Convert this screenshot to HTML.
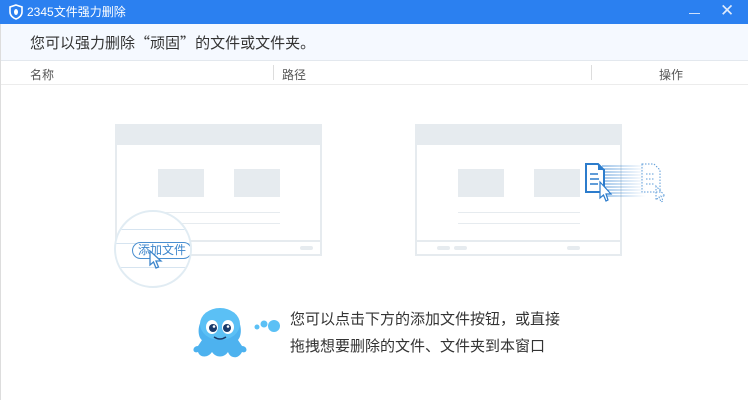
<!DOCTYPE html>
<html><head><meta charset="utf-8"><style>
*{margin:0;padding:0;box-sizing:border-box}
body{width:748px;height:400px;overflow:hidden;background:#fff;font-family:"Liberation Sans","Noto Sans CJK SC",sans-serif;position:relative}
.a{position:absolute}
.win{position:absolute;width:207px;height:132px;border:2px solid #e6ebef;background:#fff}
.win .top{position:absolute;left:0;top:0;right:0;height:19px;background:#e6ebef}
.box{position:absolute;width:46px;height:28px;background:#e6ebef}
.ln{position:absolute;height:1px;background:#e6ebef;width:122px;left:41px}
.bot{position:absolute;left:0;right:0;top:114px;height:2px;background:#e6ebef}
.pill{position:absolute;height:4px;width:13px;border-radius:2px;background:#e6ebef;top:120px}
.q{font-family:"Noto Sans CJK SC",sans-serif}
</style></head><body>
<div class="a" style="left:0;top:0;width:748px;height:24px;background:#2b80f0"></div>
<svg class="a" style="left:9px;top:4px" width="14" height="16" viewBox="0 0 14 16"><path d="M7 1 L13 3 V8 C13 11.5 10 14 7 15 C4 14 1 11.5 1 8 V3 Z" fill="none" stroke="#fff" stroke-width="1.6"/><ellipse cx="7" cy="8" rx="2" ry="3" fill="#fff"/></svg>
<div class="a" style="left:27px;top:4px;color:#fff;font-size:12px;line-height:16px">2345文件强力删除</div>
<div class="a" style="left:689px;top:13px;width:11px;height:1px;background:#cfe0fb"></div>
<div class="a" style="left:720px;top:1px;color:#dfeafc;font-size:17px;line-height:20px">✕</div>
<div class="a" style="left:0;top:24px;width:748px;height:37px;background:#f5f9ff;border-bottom:1px solid #e3e8ee"></div>
<div class="a" style="left:30px;top:33px;font-size:15px;color:#333;line-height:20px">您可以强力删除<span class="q">“</span>顽固<span class="q">”</span>的文件或文件夹。</div>
<div class="a" style="left:0;top:61px;width:748px;height:24px;border-bottom:1px solid #ececec"></div>
<div class="a" style="left:30px;top:66px;font-size:12px;color:#555">名称</div>
<div class="a" style="left:273px;top:65px;width:1px;height:15px;background:#ddd"></div>
<div class="a" style="left:282px;top:66px;font-size:12px;color:#555">路径</div>
<div class="a" style="left:591px;top:65px;width:1px;height:15px;background:#ddd"></div>
<div class="a" style="left:659px;top:66px;font-size:12px;color:#555">操作</div>
<div class="a" style="left:0;top:24px;width:1px;height:376px;background:#ddd"></div>

<div class="win" style="left:115px;top:124px"><div class="top"></div>
<div class="box" style="left:41px;top:43px"></div><div class="box" style="left:117px;top:43px"></div>
<div class="ln" style="top:86px"></div><div class="ln" style="top:97px"></div>
<div class="bot"></div><div class="pill" style="left:183px"></div></div>
<div class="a" style="left:114px;top:210px;width:78px;height:78px;border-radius:50%;border:2px solid #e1ecf3;background:#fff;overflow:hidden">
<div class="a" style="left:0;top:17px;width:78px;height:1px;background:#d6e4f0"></div>
<div class="a" style="left:0;top:31px;width:78px;height:1px;background:#d6e4f0"></div>
<div class="a" style="left:0;top:55px;width:78px;height:1px;background:#d6e4f0"></div>
<div class="a" style="left:16px;top:30px;width:60px;height:17px;border:1.5px solid #4a8fd0;border-radius:9px;font-size:12px;color:#3d86cc;line-height:14px;text-align:center;background:#fff">添加文件</div>
<svg class="a" style="left:33px;top:38px" width="14" height="20" viewBox="0 0 14 20"><path d="M1 1 V15 L4.5 12 L7 18 L9.5 17 L7 11 L12 11 Z" fill="#fff" stroke="#3d86cc" stroke-width="1.3"/></svg>
</div>

<div class="win" style="left:415px;top:124px"><div class="top"></div>
<div class="box" style="left:41px;top:43px"></div><div class="box" style="left:117px;top:43px"></div>
<div class="ln" style="top:86px"></div><div class="ln" style="top:97px"></div>
<div class="bot"></div><div class="pill" style="left:20px"></div><div class="pill" style="left:37px"></div><div class="pill" style="left:150px"></div></div>
<svg class="a" style="left:584px;top:160px" width="86" height="44" viewBox="0 0 86 44">
<defs><linearGradient id="g" x1="0" x2="1"><stop offset="0" stop-color="#4a90d6"/><stop offset="1" stop-color="#4a90d6" stop-opacity="0"/></linearGradient></defs>
<g stroke="url(#g)" stroke-width="1"><path d="M18 6H62M18 9H62M18 12H62M18 15H62M18 18H62M18 21H62M18 24H62M18 27H62M18 30H62M18 33H62M18 36H62"/></g>
<path d="M2 4 H14 L20 10 V32 H2 Z" fill="#fff" stroke="#2c7ccc" stroke-width="2"/>
<path d="M14 4 V10 H20" fill="#2c7ccc"/>
<path d="M6 14H14M6 19H15M6 24H14" stroke="#2c7ccc" stroke-width="1.5"/>
<path d="M16 22 V38 L19.5 35 L22 41 L24 40 L22 34 L27 34 Z" fill="#fff" stroke="#2c7ccc" stroke-width="1.2"/>
<g stroke="#5b9bd8" stroke-width="1" fill="none" stroke-dasharray="1.5 1.5"><path d="M58 4 H70 L76 10 V32 H58 Z"/><path d="M62 14H70M62 19H71M62 24H70"/><path d="M72 26 V40 L75 37 L77 42 L79 41 L77 36 L81 36 Z"/></g>
</svg>

<svg class="a" style="left:190px;top:302px" width="92" height="60" viewBox="0 0 92 60">
<path d="M8 50 C2 52 2 44 8 44 L12 38 C6 34 6 10 30 8 C52 8 54 32 48 38 L52 44 C58 44 58 52 52 50 C48 58 40 56 38 50 C34 56 26 56 22 50 C18 56 10 56 8 50 Z" fill="#4db2ef"/>
<ellipse cx="30" cy="22" rx="20" ry="16" fill="#5bc0f5"/>
<ellipse cx="22" cy="25" rx="6" ry="7" fill="#fff"/><ellipse cx="38" cy="25" rx="6" ry="7" fill="#fff"/>
<circle cx="23" cy="26" r="4" fill="#1a3a6a"/><circle cx="37" cy="26" r="4" fill="#1a3a6a"/>
<circle cx="24" cy="24.5" r="1.3" fill="#fff"/><circle cx="38" cy="24.5" r="1.3" fill="#fff"/>
<path d="M24 35 Q30 39 36 35" stroke="#1a3a6a" stroke-width="1.5" fill="none"/>
<circle cx="67" cy="25" r="2.5" fill="#5bc0f5"/><circle cx="74" cy="22" r="3.5" fill="#5bc0f5"/><circle cx="84" cy="24" r="6" fill="#5bc0f5"/>
</svg>
<div class="a" style="left:290px;top:306px;font-size:15px;color:#333;line-height:27px">您可以点击下方的添加文件按钮，或直接<br>拖拽想要删除的文件、文件夹到本窗口</div>
</body></html>
